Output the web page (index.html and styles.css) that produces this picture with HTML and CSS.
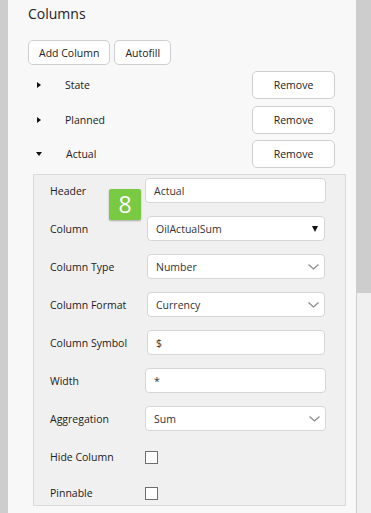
FILE: index.html
```html
<!DOCTYPE html>
<html lang="en">

<head>
    <meta charset="UTF-8">
    <meta name="viewport" content="width=device-width, initial-scale=1.0">
    <title>Columns</title>
    <link rel="stylesheet" href="styles.css">
</head>

<body>
    <div class="panel">
        <div class="title">Columns</div>
        <div class="toolbar">
            <button class="btn">Add Column</button>
            <button class="btn">Autofill</button>
        </div>

        <div class="col-row">
            <span class="caret"></span>
            <span class="col-name">State</span>
            <button class="btn remove">Remove</button>
        </div>
        <div class="col-row">
            <span class="caret"></span>
            <span class="col-name">Planned</span>
            <button class="btn remove">Remove</button>
        </div>
        <div class="col-row">
            <span class="caret open"></span>
            <span class="col-name">Actual</span>
            <button class="btn remove">Remove</button>
        </div>

        <div class="detail">
            <div class="badge">8</div>
            <div class="field">
                <label>Header</label>
                <div class="input">Actual</div>
            </div>
            <div class="field">
                <label>Column</label>
                <div class="input select">OilActualSum<span class="solid-arrow"></span></div>
            </div>
            <div class="field">
                <label>Column Type</label>
                <div class="input select">Number<svg class="chev" width="11" height="6" viewBox="0 0 11 6"><path d="M0.5 0.5 L5.5 5 L10.5 0.5" fill="none" stroke="#8a8a8a" stroke-width="1.2"/></svg></div>
            </div>
            <div class="field">
                <label>Column Format</label>
                <div class="input select">Currency<svg class="chev" width="11" height="6" viewBox="0 0 11 6"><path d="M0.5 0.5 L5.5 5 L10.5 0.5" fill="none" stroke="#8a8a8a" stroke-width="1.2"/></svg></div>
            </div>
            <div class="field">
                <label>Column Symbol</label>
                <div class="input select">$</div>
            </div>
            <div class="field">
                <label>Width</label>
                <div class="input">*</div>
            </div>
            <div class="field">
                <label>Aggregation</label>
                <div class="input">Sum<svg class="chev" width="11" height="6" viewBox="0 0 11 6"><path d="M0.5 0.5 L5.5 5 L10.5 0.5" fill="none" stroke="#8a8a8a" stroke-width="1.2"/></svg></div>
            </div>
            <div class="field check">
                <label>Hide Column</label>
                <span class="box"></span>
            </div>
            <div class="field check">
                <label>Pinnable</label>
                <span class="box"></span>
            </div>
        </div>
    </div>
    <div class="scrollbar">
        <div class="thumb"></div>
    </div>
</body>

</html>
```

FILE: styles.css
```css
body {
    margin: 0;
    background-color: #cdcdcd;
    display: flex;
    height: 513px;
    overflow: hidden;
    font-family: 'Open Sans', 'Noto Sans', sans-serif;
    color: #222;
}

.panel {
    margin-left: 8px;
    width: 348px;
    box-sizing: border-box;
    padding: 4px 21px 0 20px;
    background-color: #f8f8f8;
}

.title {
    font-size: 14px;
    line-height: 20px;
}

.toolbar {
    display: flex;
    gap: 4px;
    margin-top: 16px;
    margin-bottom: 6px;
}

.btn {
    font-family: inherit;
    font-size: 10.5px;
    color: #222;
    background-color: white;
    border: 1px solid #cfcfcf;
    border-radius: 5px;
    height: 25px;
    padding: 0 10px;
}

.col-row {
    display: flex;
    align-items: center;
    height: 28px;
    margin-bottom: 6.5px;
    font-size: 10.5px;
}

.caret {
    width: 0;
    height: 0;
    margin-left: 9px;
    border-top: 3.5px solid transparent;
    border-bottom: 3.5px solid transparent;
    border-left: 4px solid #111;
}

.caret.open {
    margin-left: 8px;
    border-left: 3.5px solid transparent;
    border-right: 3.5px solid transparent;
    border-top: 4px solid #111;
    border-bottom: 0;
}

.col-name {
    margin-left: 24px;
    flex: 1;
}

.remove {
    width: 83px;
    height: 28px;
}

.detail {
    position: relative;
    margin: -0.5px -11px 0 5px;
    border: 1px solid #dadada;
    background-color: #f0f0f0;
    padding: 3px 19px 2px 16px;
    display: flex;
    flex-direction: column;
    gap: 13px;
}

.field {
    display: flex;
    align-items: center;
    height: 25px;
    font-size: 10.5px;
}

.field label {
    width: 95px;
}

.input {
    flex: 1;
    height: 25px;
    box-sizing: border-box;
    border: 1px solid #d6d6d6;
    border-radius: 4px;
    background-color: white;
    display: flex;
    align-items: center;
    justify-content: space-between;
    padding: 0 5px 0 8px;
    color: #333;
}

.input.select {
    margin-left: 2px;
    margin-right: 1px;
}

.solid-arrow {
    width: 0;
    height: 0;
    margin-right: 1px;
    border-left: 3px solid transparent;
    border-right: 3px solid transparent;
    border-top: 6px solid #111;
}

.field.check {
    height: 20px;
    margin-top: 3px;
}

.box {
    width: 13px;
    height: 13px;
    box-sizing: border-box;
    border: 1px solid #6e6e6e;
    background-color: white;
}

.badge {
    position: absolute;
    left: 75px;
    top: 14px;
    width: 32px;
    height: 31px;
    background-color: #7ac943;
    border-radius: 2px;
    box-shadow: 0 1px 2px rgba(0, 0, 0, 0.3);
    color: white;
    font-size: 23px;
    line-height: 31px;
    text-align: center;
}

.scrollbar {
    margin-left: 1px;
    width: 14px;
    background-color: #f0f0f0;
}

.thumb {
    height: 293px;
    background-color: #cdcdcd;
}
```
